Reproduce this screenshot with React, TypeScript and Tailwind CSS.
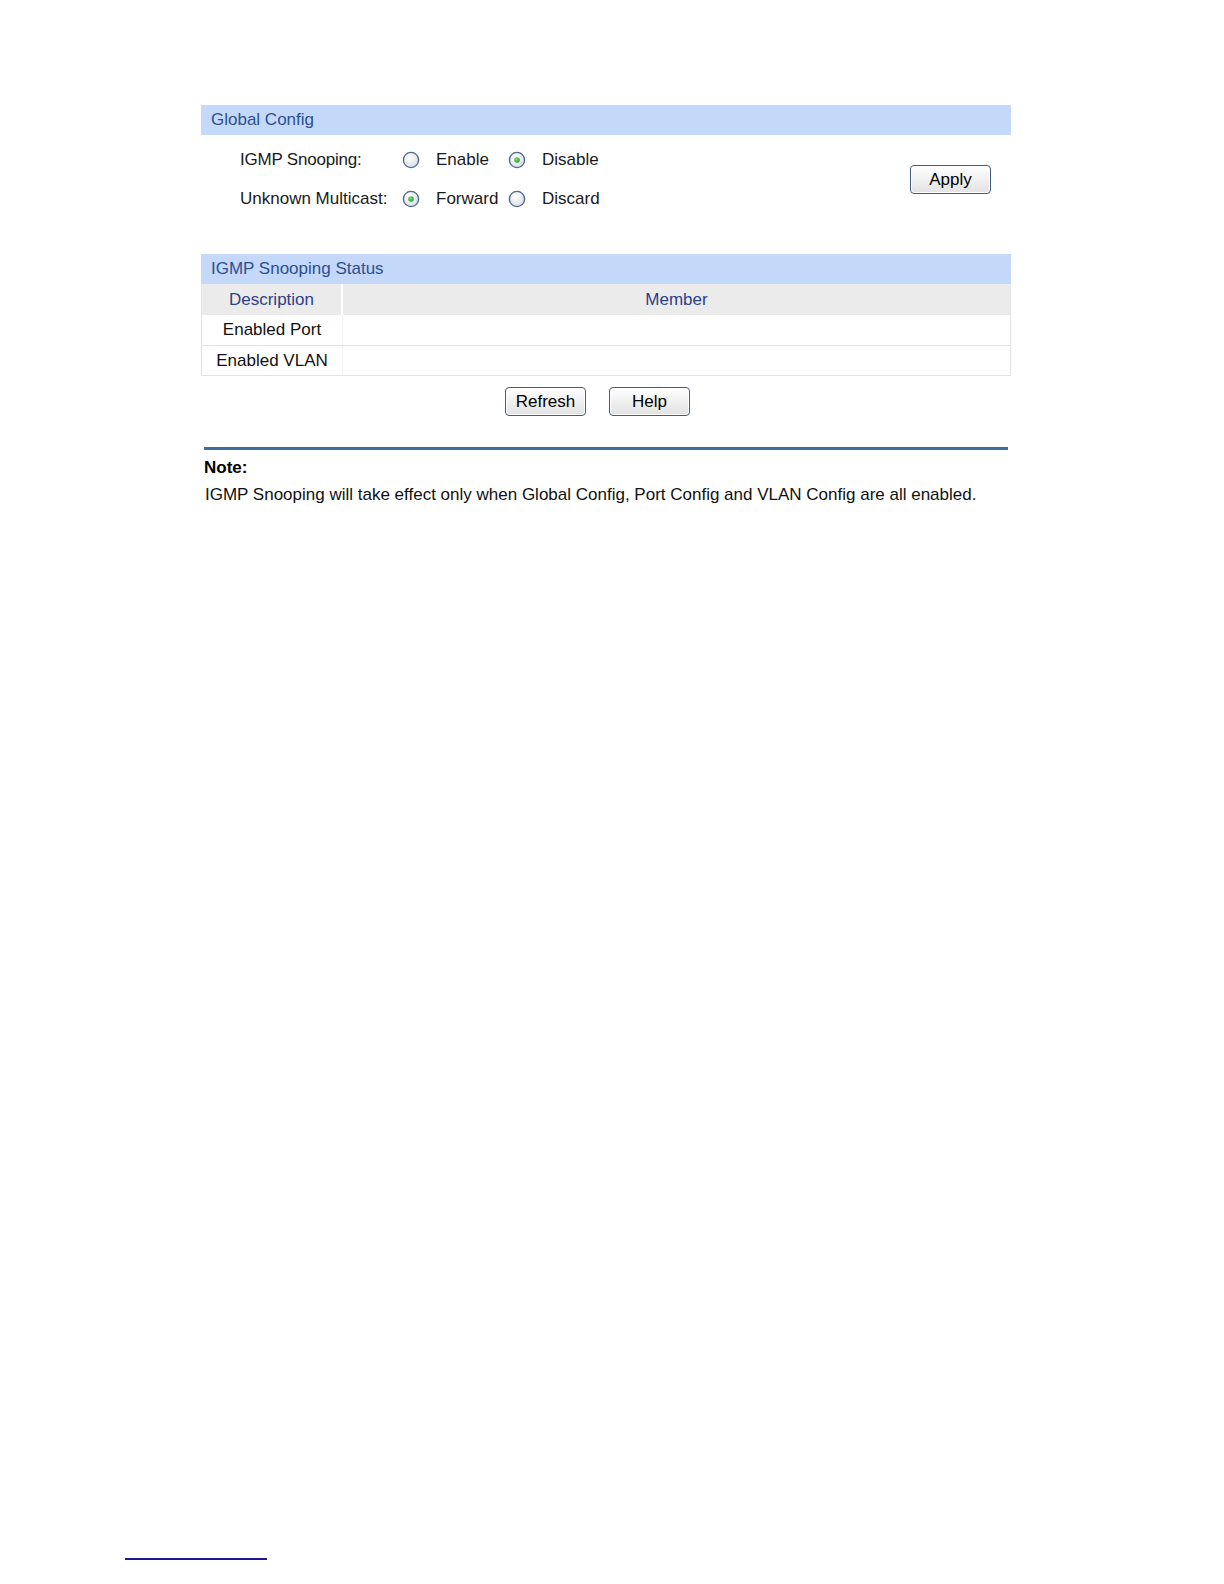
import React from "react";

function Radio({ checked }: { checked: boolean }) {
  return (
    <svg width="18" height="18" viewBox="0 0 18 18" className="shrink-0">
      <defs>
        <radialGradient id={checked ? "rg1" : "rg0"} cx="40%" cy="35%" r="70%">
          <stop offset="0%" stopColor="#ffffff" />
          <stop offset="100%" stopColor="#d8dde3" />
        </radialGradient>
        <radialGradient id="dot" cx="40%" cy="35%" r="70%">
          <stop offset="0%" stopColor="#7fe07f" />
          <stop offset="100%" stopColor="#1f9a2a" />
        </radialGradient>
      </defs>
      <circle cx="9" cy="9" r="7.6" fill={`url(#${checked ? "rg1" : "rg0"})`} stroke="#4f6c8c" strokeWidth="1.4" />
      {checked && <circle cx="9" cy="9" r="2.8" fill="url(#dot)" />}
    </svg>
  );
}

function Btn({ children }: { children: React.ReactNode }) {
  return (
    <button className="w-[81px] h-[29px] rounded-[4px] border border-[#3e5f80] bg-gradient-to-b from-[#ffffff] to-[#e2e2e2] text-[17px] text-black leading-none shadow-[inset_0_0_0_1px_#ffffff]">
      {children}
    </button>
  );
}

export default function App() {
  return (
    <div className="min-h-[1584px] bg-white relative" style={{ fontFamily: '"Liberation Sans", Arial, sans-serif' }}>
      <div className="pt-[105px] pl-[201px] w-[1011px]">
        {/* Global Config */}
        <div className="w-[810px]">
          <div className="h-[30px] bg-[#c4d9fa] flex items-center pl-[10px] text-[17px] text-[#2d4f8f]">Global Config</div>
          <div className="flex items-center pt-[5px] pb-[36px]">
            <div className="flex-1 pl-[39px] text-[17px] text-[#1a1a1a]">
              <div className="h-[39px] flex items-center">
                <div className="w-[162px] tracking-[-0.2px]">IGMP Snooping:</div>
                <div className="w-[106px] flex items-center">
                  <Radio checked={false} />
                  <span className="ml-[16px]">Enable</span>
                </div>
                <div className="flex items-center">
                  <Radio checked={true} />
                  <span className="ml-[16px]">Disable</span>
                </div>
              </div>
              <div className="h-[39px] flex items-center">
                <div className="w-[162px]">Unknown Multicast:</div>
                <div className="w-[106px] flex items-center">
                  <Radio checked={true} />
                  <span className="ml-[16px]">Forward</span>
                </div>
                <div className="flex items-center">
                  <Radio checked={false} />
                  <span className="ml-[16px]">Discard</span>
                </div>
              </div>
            </div>
            <div className="pr-[20px]">
              <Btn>Apply</Btn>
            </div>
          </div>

          {/* IGMP Snooping Status */}
          <div className="h-[30px] bg-[#c4d9fa] flex items-center pl-[10px] text-[17px] text-[#2d4f8f]">IGMP Snooping Status</div>
          <div className="border-x border-b border-[#e3e3e3]">
            <div className="flex h-[31px] bg-[#ebebeb] text-[17px] text-[#2b4187]">
              <div className="w-[141px] flex items-center justify-center border-r-2 border-white">Description</div>
              <div className="flex-1 flex items-center justify-center">Member</div>
            </div>
            <div className="flex h-[31px] border-b border-[#e3e3e3] text-[17px] text-[#111]">
              <div className="w-[141px] flex items-center justify-center border-r border-[#f2f2f2]">Enabled Port</div>
              <div className="flex-1"></div>
            </div>
            <div className="flex h-[29px] text-[17px] text-[#111]">
              <div className="w-[141px] flex items-center justify-center border-r border-[#f2f2f2]">Enabled VLAN</div>
              <div className="flex-1"></div>
            </div>
          </div>
          <div className="flex justify-center gap-[23px] pt-[11px] pr-[17px]">
            <Btn>Refresh</Btn>
            <Btn>Help</Btn>
          </div>
        </div>

        {/* Note */}
        <div className="ml-[3px] w-[804px] mt-[31px] h-[3px] bg-[#3c6e9e]"></div>
        <div className="ml-[3px] mt-[8px] text-[17px] font-bold text-black leading-[20px]">Note:</div>
        <div className="ml-[4px] mt-[7px] text-[17px] text-[#111] leading-[20px] whitespace-nowrap">
          IGMP Snooping will take effect only when Global Config, Port Config and VLAN Config are all enabled.
        </div>
      </div>

      <div className="absolute left-[125px] top-[1558px] w-[142px] h-[2px] bg-[#1a1a8c]"></div>
    </div>
  );
}
